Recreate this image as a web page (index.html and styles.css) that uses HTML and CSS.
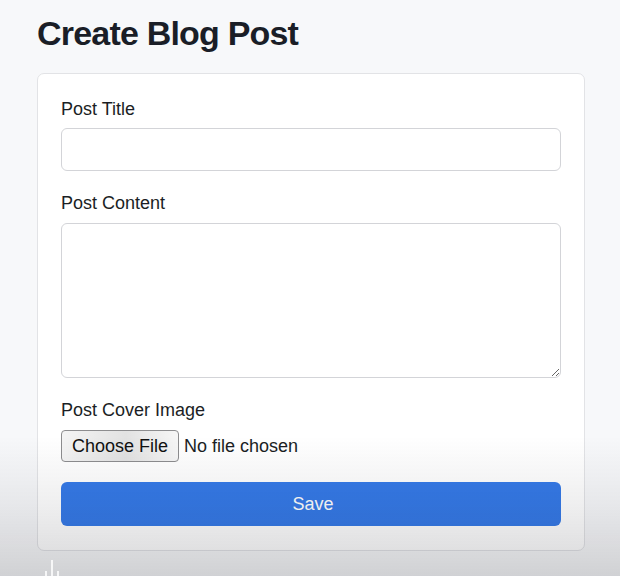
FILE: index.html
```html
<!DOCTYPE html>
<html lang="en">
<head>
<meta charset="utf-8">
<title>Create Blog Post</title>
<link rel="stylesheet" href="styles.css">
</head>
<body>
<main class="page">
  <h1 class="title">Create Blog Post</h1>
  <form class="card">
    <div class="field">
      <label class="label" for="t">Post Title</label>
      <input class="input" id="t" type="text">
    </div>
    <div class="field">
      <label class="label" for="c">Post Content</label>
      <textarea class="textarea" id="c"></textarea>
    </div>
    <div class="field">
      <span class="label">Post Cover Image</span>
      <div class="file">
        <span class="file-btn">Choose File</span>
        <span class="file-name">No file chosen</span>
      </div>
    </div>
    <button class="save" type="button">Save</button>
  </form>
</main>
<div class="shade"></div>
<svg class="cursor" width="24" height="16" viewBox="0 0 24 16">
  <path d="M12 0 V16 M6 11 V16 M18 11 V16" stroke="#fff" stroke-width="1.6" fill="none"/>
</svg>
</body>
</html>
```
FILE: styles.css
```css
* { box-sizing: border-box; }
html, body { margin: 0; height: 100%; }
body {
  background: #f7f8fa;
  font-family: "Liberation Sans", Arial, sans-serif;
  color: #1b1e24;
  overflow: hidden;
}
.page {
  padding: 0 35px 0 37px;
}
.title {
  margin: 0;
  padding-top: 12px;
  font-size: 34px;
  line-height: 42px;
  font-weight: 700;
  color: #1a1e27;
  letter-spacing: -0.8px;
}
.card {
  margin-top: 19px;
  background: #fff;
  border: 1px solid #e2e3e6;
  border-radius: 7px;
  padding: 23px 23px 24px;
  display: flex;
  flex-direction: column;
  gap: 20px;
}
.field { display: flex; flex-direction: column; }
.label {
  font-size: 18px;
  line-height: 24px;
  margin-bottom: 7px;
  color: #1b1e24;
}
.input {
  height: 43px;
  border: 1px solid #d3d4d8;
  border-radius: 6px;
  background: #fff;
  font: inherit;
}
.textarea {
  height: 155px;
  margin-top: 1px;
  border: 1px solid #d3d4d8;
  border-radius: 6px;
  background: #fff;
  font: inherit;
}
.file {
  display: flex;
  align-items: center;
  gap: 5px;
  margin-top: 1px;
}
.file-btn {
  height: 32px;
  padding: 0 10px;
  display: flex;
  align-items: center;
  font-size: 18px;
  border: 1px solid #8d8d8f;
  border-radius: 4px;
  background: linear-gradient(to right, #f4f4f4 0%, #e2e2e2 55%, #f6f6f6 100%);
  color: #111;
}
.file-name { font-size: 18px; color: #1b1e24; }
.save {
  height: 44px;
  border: 0;
  border-radius: 6px;
  background: #357ae8;
  color: #fff;
  font: inherit;
  font-size: 18px;
  padding-left: 10px;
}
.shade {
  position: fixed;
  left: 0; right: 0; bottom: 0;
  height: 140px;
  background: linear-gradient(to bottom, rgba(20,20,30,0) 0%, rgba(20,20,30,0.07) 50%, rgba(20,20,30,0.17) 100%);
  pointer-events: none;
}
.cursor {
  position: fixed;
  left: 40px;
  bottom: 0;
}
```
